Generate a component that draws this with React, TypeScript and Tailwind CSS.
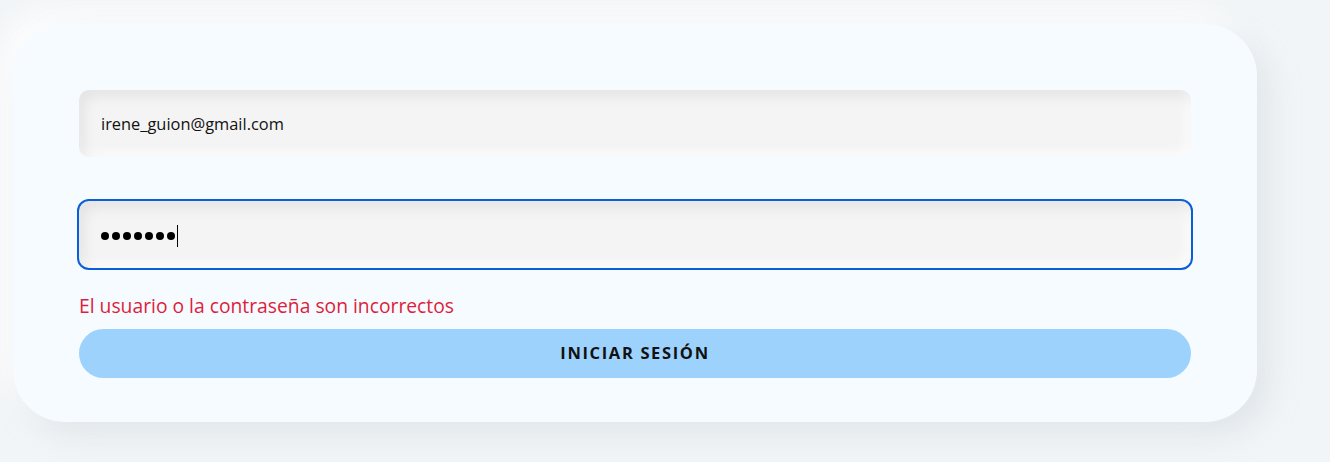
import React from 'react';

const FONT = { fontFamily: '"Open Sans", "Noto Sans", sans-serif' };

function Field({ children, focused }: { children: React.ReactNode; focused?: boolean }) {
  return (
    <div
      className={
        'flex h-[67px] items-center rounded-[10px] bg-[#f4f4f4] px-[22px] pt-[2px] shadow-[inset_5px_6px_14px_rgba(0,0,0,0.07),inset_-4px_-4px_12px_rgba(255,255,255,0.9)] ' +
        (focused ? 'outline-2 outline-[#0a5fd8]' : '')
      }
    >
      {children}
    </div>
  );
}

export default function App() {
  return (
    <div className="min-h-[462px] w-full bg-[#f2f5f7] pl-[13px] pt-[24px]" style={FONT}>
      <div className="w-[1244px] rounded-[52px] bg-[#f6fbff] px-[66px] pb-[44px] pt-[66px] shadow-[12px_12px_30px_rgba(190,200,210,0.35),-12px_-12px_30px_rgba(255,255,255,0.9)]">
        <Field>
          <span className="text-[16.4px] text-[#111]">irene_guion@gmail.com</span>
        </Field>

        <div className="mt-[44px]">
          <Field focused>
            <span className="flex items-center">
              {Array.from({ length: 7 }).map((_, i) => (
                <span key={i} className="mr-[3px] inline-block h-[8px] w-[8px] rounded-full bg-black" />
              ))}
              <span className="ml-[-1px] inline-block h-[22px] w-px bg-black" />
            </span>
          </Field>
        </div>

        <p className="mt-[25px] text-[19.3px] leading-[26px] text-[#dc1f3c]">
          El usuario o la contraseña son incorrectos
        </p>

        <button className="mt-[10px] flex h-[49px] w-full items-center justify-center rounded-full bg-[#9dd2fd] text-[16.5px] font-bold tracking-[0.1em] text-[#111]">
          INICIAR SESIÓN
        </button>
      </div>
    </div>
  );
}
